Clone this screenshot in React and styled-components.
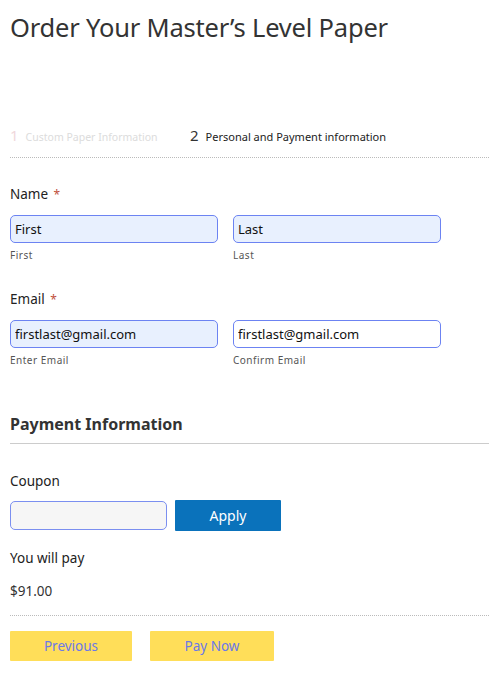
import React from "react";
import styled, { createGlobalStyle } from "styled-components";

const GlobalStyle = createGlobalStyle`
  body {
    margin: 0;
    background: #ffffff;
    font-family: "Noto Sans", "Open Sans", sans-serif;
    color: #222;
  }
`;

const Page = styled.div`
  padding: 0 0 0 10px;
  width: 479px;
`;

const Title = styled.h1`
  margin: 0;
  padding-top: 9px;
  font-size: 25.5px;
  font-weight: 400;
  color: #333;
  line-height: 36px;
  letter-spacing: -0.2px;
`;

const Steps = styled.div`
  display: flex;
  align-items: baseline;
  margin-top: 80px;
  padding-bottom: 12px;
  border-bottom: 1px dotted #bbb;
`;

const Step = styled.div`
  display: flex;
  align-items: baseline;
  gap: 7px;
  width: ${(p) => (p.$width ? p.$width : "auto")};
  color: ${(p) => (p.$active ? "#222" : "#dcdcdc")};
`;

const StepNum = styled.span`
  font-size: 15px;
  color: ${(p) => (p.$active ? "#333" : "#f0d8dc")};
`;

const StepText = styled.span`
  font-size: ${(p) => (p.$active ? "11px" : "10.5px")};
`;

const Field = styled.div`
  margin-top: ${(p) => p.$top || "0"};
`;

const Label = styled.div`
  font-size: 13.5px;
  color: #222;
  line-height: 18px;
`;

const Req = styled.span`
  color: #c0503c;
  font-size: 12px;
  margin-left: 2px;
`;

const Row = styled.div`
  display: flex;
  gap: 15px;
  margin-top: 11px;
`;

const Col = styled.div`
  width: 208px;
`;

const Input = styled.input`
  box-sizing: border-box;
  width: 100%;
  height: 28px;
  border: 1px solid #6c83f2;
  border-radius: 5px;
  background: ${(p) => (p.$filled ? "#e8f0fe" : "#fff")};
  font-family: inherit;
  font-size: 13px;
  color: #111;
  padding: 0 4px;
  outline: none;
`;

const Sub = styled.div`
  font-size: 10px;
  color: #555;
  letter-spacing: 0.5px;
  margin-top: 5px;
`;

const SectionTitle = styled.h2`
  margin: 46px 0 0;
  font-size: 16px;
  font-weight: 700;
  color: #333;
  padding-bottom: 8px;
  border-bottom: 1px solid #ccc;
`;

const CouponRow = styled.div`
  display: flex;
  gap: 8px;
  margin-top: 10px;
  align-items: center;
`;

const CouponInput = styled.input`
  box-sizing: border-box;
  width: 157px;
  height: 29px;
  border: 1px solid #7b8ff0;
  border-radius: 5px;
  background: #f6f6f6;
  outline: none;
`;

const ApplyButton = styled.button`
  width: 106px;
  height: 31px;
  border: none;
  border-radius: 1px;
  background: #0a72bb;
  color: #fff;
  font-family: inherit;
  font-size: 14px;
`;

const Text = styled.div`
  font-size: 13.5px;
  color: ${(p) => p.$color || "#222"};
  margin-top: ${(p) => p.$top || "0"};
  line-height: 18px;
`;

const Divider = styled.div`
  border-top: 1px dotted #bbb;
  margin-top: 15px;
`;

const Actions = styled.div`
  display: flex;
  gap: 18px;
  margin-top: 15px;
`;

const NavButton = styled.button`
  width: ${(p) => p.$width};
  height: 30px;
  border: none;
  border-radius: 1px;
  background: #ffde59;
  color: #6b79e8;
  font-family: inherit;
  font-size: 13.5px;
`;

export default function App() {
  return (
    <Page>
      <GlobalStyle />
      <Title>Order Your Master’s Level Paper</Title>

      <Steps>
        <Step $width="180px">
          <StepNum>1</StepNum>
          <StepText>Custom Paper Information</StepText>
        </Step>
        <Step $active>
          <StepNum $active>2</StepNum>
          <StepText $active>Personal and Payment information</StepText>
        </Step>
      </Steps>

      <Field $top="27px">
        <Label>
          Name <Req>*</Req>
        </Label>
        <Row>
          <Col>
            <Input $filled defaultValue="First" />
            <Sub>First</Sub>
          </Col>
          <Col>
            <Input $filled defaultValue="Last" />
            <Sub>Last</Sub>
          </Col>
        </Row>
      </Field>

      <Field $top="28px">
        <Label>
          Email <Req>*</Req>
        </Label>
        <Row>
          <Col>
            <Input $filled defaultValue="firstlast@gmail.com" />
            <Sub>Enter Email</Sub>
          </Col>
          <Col>
            <Input defaultValue="firstlast@gmail.com" />
            <Sub>Confirm Email</Sub>
          </Col>
        </Row>
      </Field>

      <SectionTitle>Payment Information</SectionTitle>

      <Text $top="28px">Coupon</Text>
      <CouponRow>
        <CouponInput />
        <ApplyButton>Apply</ApplyButton>
      </CouponRow>

      <Text $top="18px">You will pay</Text>
      <Text $top="15px" $color="#333">$91.00</Text>

      <Divider />

      <Actions>
        <NavButton $width="122px">Previous</NavButton>
        <NavButton $width="124px">Pay Now</NavButton>
      </Actions>
    </Page>
  );
}
